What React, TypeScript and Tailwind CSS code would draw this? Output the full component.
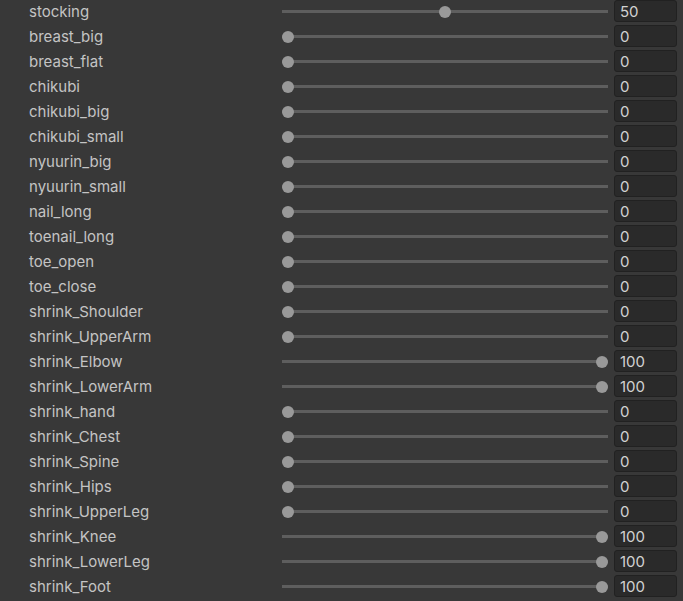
import React from "react";

const rows: [string, number][] = [
  ["stocking", 50],
  ["breast_big", 0],
  ["breast_flat", 0],
  ["chikubi", 0],
  ["chikubi_big", 0],
  ["chikubi_small", 0],
  ["nyuurin_big", 0],
  ["nyuurin_small", 0],
  ["nail_long", 0],
  ["toenail_long", 0],
  ["toe_open", 0],
  ["toe_close", 0],
  ["shrink_Shoulder", 0],
  ["shrink_UpperArm", 0],
  ["shrink_Elbow", 100],
  ["shrink_LowerArm", 100],
  ["shrink_hand", 0],
  ["shrink_Chest", 0],
  ["shrink_Spine", 0],
  ["shrink_Hips", 0],
  ["shrink_UpperLeg", 0],
  ["shrink_Knee", 100],
  ["shrink_LowerLeg", 100],
  ["shrink_Foot", 100],
];

function Row({ label, value }: { label: string; value: number }) {
  return (
    <div className="flex h-[25px] items-start">
      <div className="flex h-[25px] w-[282px] shrink-0 items-center pl-[29px] text-[15px] text-[#c4c4c4]">
        {label}
      </div>
      <div className="relative h-[23px] w-[326px] shrink-0">
        <div className="absolute left-0 right-0 top-[10px] h-[3px] bg-[#5e5e5e]" />
        <div
          className="absolute top-[6px] h-[12px] w-[12px] rounded-full bg-[#999999]"
          style={{ left: `${(value / 100) * 314}px` }}
        />
      </div>
      <div className="ml-[6px] flex h-[22px] w-[63px] shrink-0 items-center rounded-[3px] border border-[#212121] bg-[#2a2a2a] pl-[5px] pt-[2px] text-[15px] text-[#d2d2d2]">
        {value}
      </div>
    </div>
  );
}

export default function App() {
  return (
    <div
      className="h-[601px] w-[683px] overflow-hidden bg-[#383838]"
      style={{ fontFamily: "Inter, 'Noto Sans', sans-serif" }}
    >
      {rows.map(([l, v]) => (
        <Row key={l} label={l} value={v} />
      ))}
    </div>
  );
}
